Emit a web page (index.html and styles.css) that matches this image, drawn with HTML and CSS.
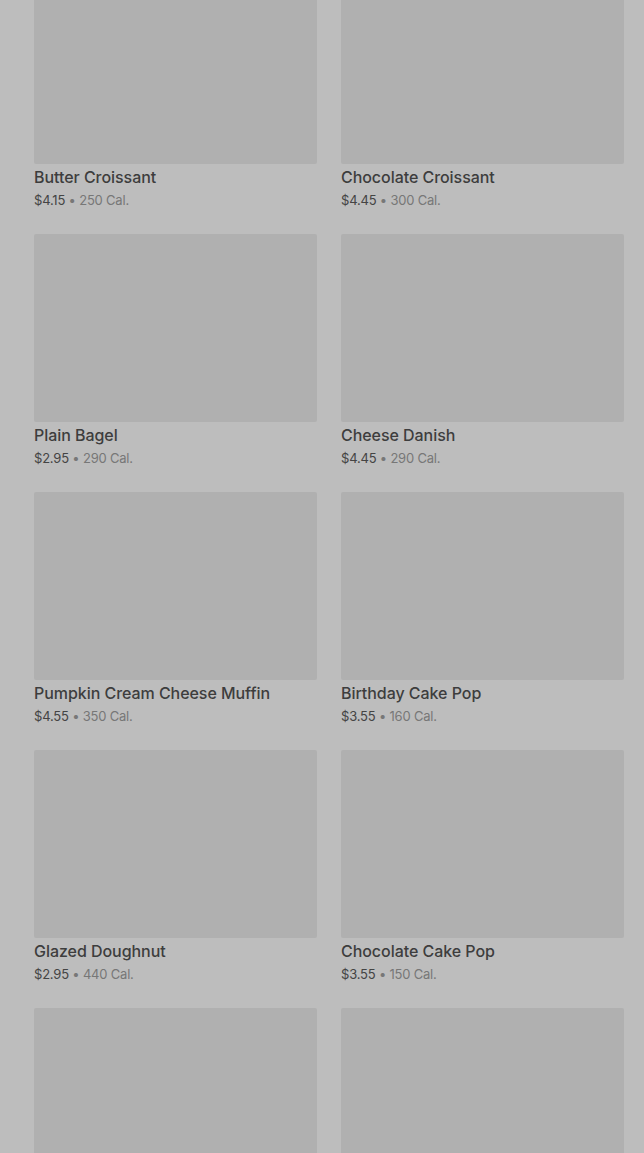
FILE: index.html
```html
<!DOCTYPE html>
<html lang="en">
<head>
    <meta charset="UTF-8">
    <meta name="viewport" content="width=device-width, initial-scale=1.0">
    <title>Bakery</title>
    <link rel="stylesheet" href="styles.css">
</head>
<body>
    <div class="menu-grid">
        <div class="product">
            <div class="product-image"></div>
            <div class="product-name">Butter Croissant</div>
            <div class="product-meta"><span class="price">$4.15</span> • 250 Cal.</div>
        </div>
        <div class="product">
            <div class="product-image"></div>
            <div class="product-name">Chocolate Croissant</div>
            <div class="product-meta"><span class="price">$4.45</span> • 300 Cal.</div>
        </div>
        <div class="product">
            <div class="product-image"></div>
            <div class="product-name">Plain Bagel</div>
            <div class="product-meta"><span class="price">$2.95</span> • 290 Cal.</div>
        </div>
        <div class="product">
            <div class="product-image"></div>
            <div class="product-name">Cheese Danish</div>
            <div class="product-meta"><span class="price">$4.45</span> • 290 Cal.</div>
        </div>
        <div class="product">
            <div class="product-image"></div>
            <div class="product-name">Pumpkin Cream Cheese Muffin</div>
            <div class="product-meta"><span class="price">$4.55</span> • 350 Cal.</div>
        </div>
        <div class="product">
            <div class="product-image"></div>
            <div class="product-name">Birthday Cake Pop</div>
            <div class="product-meta"><span class="price">$3.55</span> • 160 Cal.</div>
        </div>
        <div class="product">
            <div class="product-image"></div>
            <div class="product-name">Glazed Doughnut</div>
            <div class="product-meta"><span class="price">$2.95</span> • 440 Cal.</div>
        </div>
        <div class="product">
            <div class="product-image"></div>
            <div class="product-name">Chocolate Cake Pop</div>
            <div class="product-meta"><span class="price">$3.55</span> • 150 Cal.</div>
        </div>
        <!-- next row, still loading -->
        <div class="product">
            <div class="product-image"></div>
        </div>
        <div class="product">
            <div class="product-image"></div>
        </div>
    </div>
</body>
</html>
```

FILE: styles.css
```css
html, body {
    height: 100%;
}
body {
    margin: 0;
    overflow: hidden;
    background-color: #bdbdbd;
    font-family: Inter, "Liberation Sans", Arial, sans-serif;
}
.menu-grid {
    display: grid;
    grid-template-columns: 283px 283px;
    column-gap: 24px;
    row-gap: 24px;
    padding: 0 20px 0 34px;
    margin-top: -24px;
}
.product-image {
    height: 188px;
    background-color: #b0b0b0;
    border-radius: 2px;
}
.product-name {
    margin-top: 2px;
    font-size: 16px;
    line-height: 22px;
    font-weight: 500;
    color: #3d3d3d;
    letter-spacing: -0.05px;
}
.product-meta {
    margin-top: 2px;
    font-size: 13px;
    line-height: 20px;
    color: #777;
    letter-spacing: -0.2px;
}
.product-meta .price {
    color: #444;
}
```
